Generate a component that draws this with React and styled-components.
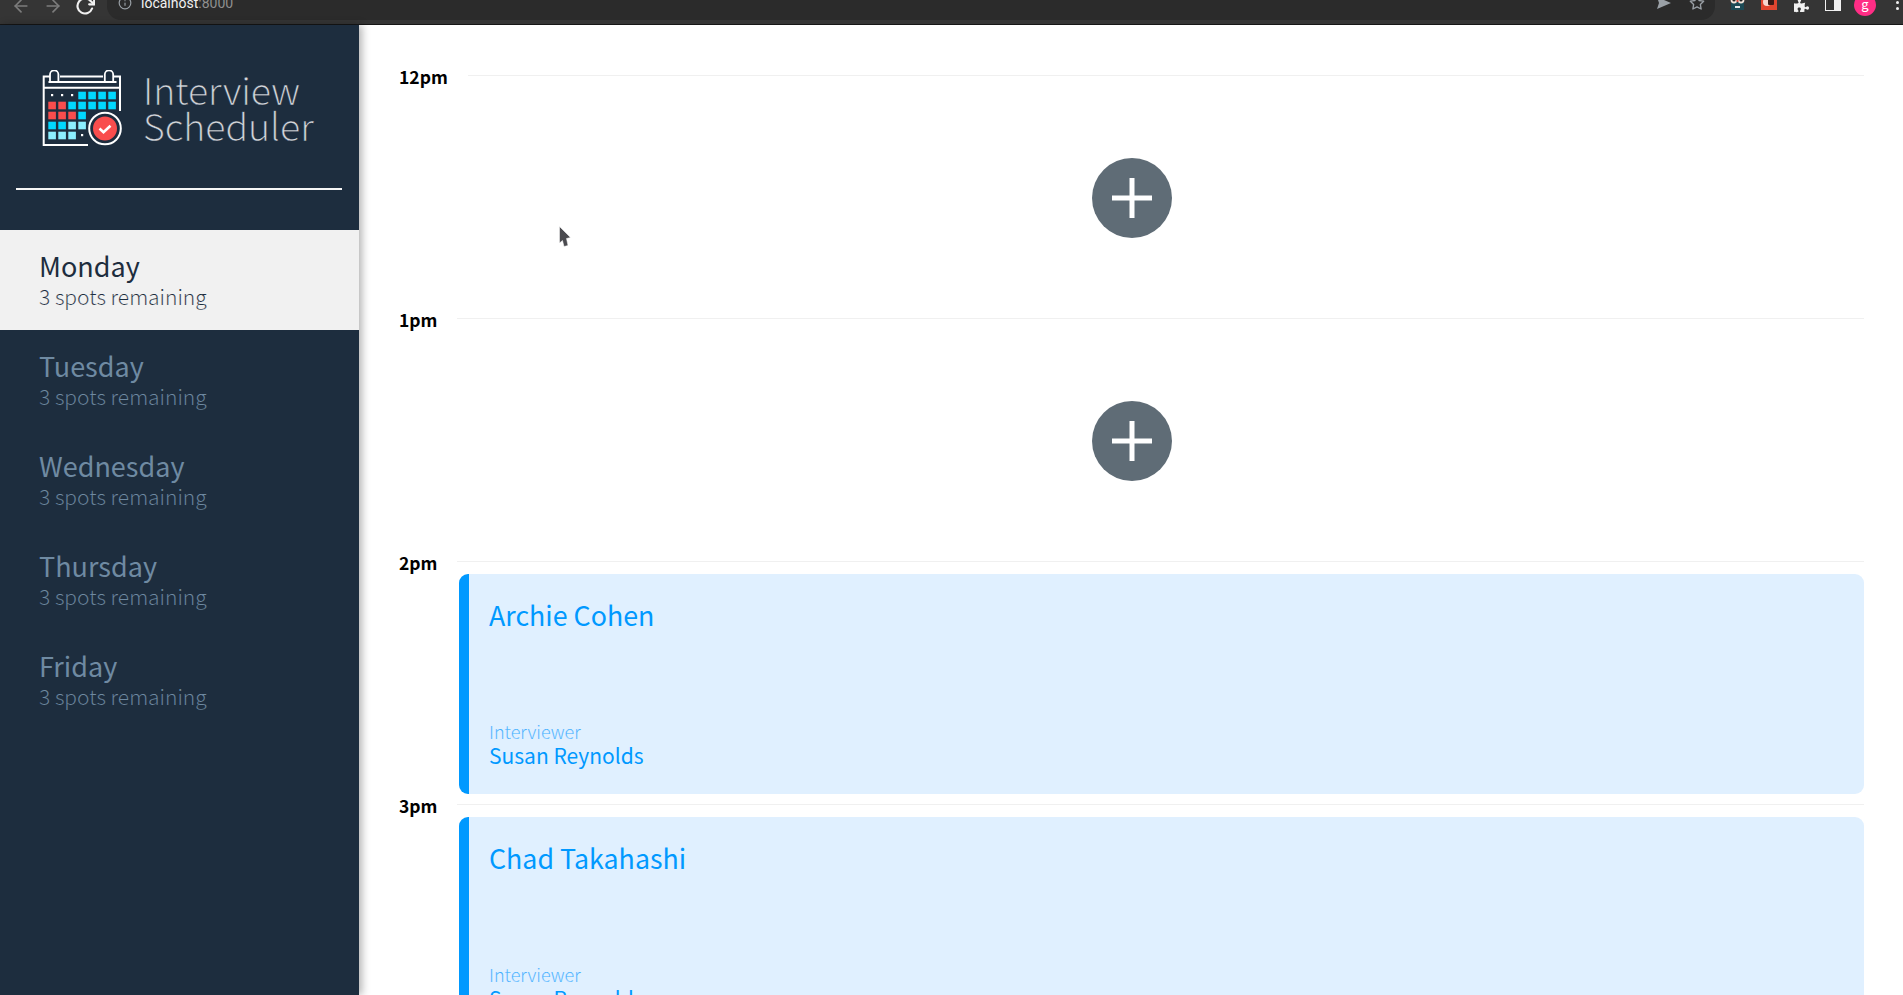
import React from 'react'
import styled, { createGlobalStyle } from 'styled-components'
import { FaPuzzlePiece } from 'react-icons/fa'
import { FiArrowLeft, FiArrowRight, FiRotateCw, FiInfo, FiStar } from 'react-icons/fi'

const sans = '"Noto Sans CJK SC", "Noto Sans", sans-serif'

const GlobalStyle = createGlobalStyle`
  html, body {
    margin: 0;
    height: 100%;
    overflow: hidden;
    font-family: ${sans};
  }
`

const days = ['Monday', 'Tuesday', 'Wednesday', 'Thursday', 'Friday']

const slots = [
  { time: '12pm' },
  { time: '1pm' },
  { time: '2pm', student: 'Archie Cohen', interviewer: 'Susan Reynolds' },
  { time: '3pm', student: 'Chad Takahashi', interviewer: 'Susan Reynolds' },
]

const cells = [
  [36.3, 21.7, '#00d8ff'], [46.3, 21.7, '#00d8ff'], [56.3, 21.7, '#00d8ff'], [66.3, 21.7, '#00d8ff'],
  [6.3, 31.7, '#f94d4d'], [16.3, 31.7, '#f94d4d'], [26.3, 31.7, '#00d8ff'], [36.3, 31.7, '#00d8ff'],
  [46.3, 31.7, '#00d8ff'], [56.3, 31.7, '#00d8ff'], [66.3, 31.7, '#00d8ff'],
  [6.3, 41.7, '#f94d4d'], [16.3, 41.7, '#f94d4d'], [26.3, 41.7, '#f94d4d'], [36.3, 41.7, '#00d8ff'],
  [6.3, 51.7, '#00d8ff'], [16.3, 51.7, '#00d8ff'], [26.3, 51.7, '#8cefff'], [36.3, 51.7, '#8cefff'],
  [6.3, 61.7, '#8cefff'], [16.3, 61.7, '#8cefff'], [26.3, 61.7, '#8cefff'],
]

function Logo() {
  return (
    <svg width="80" height="76" viewBox="0 0 80 76" fill="none" stroke="#fff" strokeWidth="2">
      <path d="M46 75H1.7V6.5H8M18 6.5H61M71 6.5H78V41" />
      <path d="M6.5 12H74.5M1.7 17.7H78" />
      <path d="M8 11V4.5a4.2 4.2 0 0 1 8.4 0V11M62.8 11V4.5a4.2 4.2 0 0 1 8.4 0V11" strokeWidth="1.8" />
      {cells.map(([x, y, c]) => (
        <rect key={`${x}-${y}`} x={x} y={y} width="7.6" height="7.6" fill={c} stroke="none" />
      ))}
      {[[10, 25], [20, 25], [30, 25], [40, 65]].map(([x, y]) => (
        <rect key={x} x={x - 1} y={y - 1} width="2.2" height="2.2" fill="#fff" stroke="none" />
      ))}
      <circle cx="63" cy="58.5" r="15.8" fill="#1d2d3e" />
      <circle cx="63" cy="58.5" r="12" fill="#f94d4d" stroke="none" />
      <path d="M57.5 58.5l4 3.8 7-6.6" strokeWidth="2.6" />
    </svg>
  )
}

function Plus() {
  return (
    <svg width="40" height="40" viewBox="0 0 40 40" stroke="#fff" strokeWidth="5">
      <path d="M20 0V40M0 20H40" />
    </svg>
  )
}

function SendIcon() {
  return (
    <svg width="14" height="16" viewBox="0 0 14 16">
      <path d="M0 2L14 8L0 14L2 8Z" fill="#9aa0a6" />
    </svg>
  )
}

function OwlExt() {
  return (
    <ExtIcon width="15" height="16" viewBox="0 0 15 16">
      <rect x="1" y="7" width="13" height="9" fill="#1d4a55" />
      <circle cx="4" cy="6" r="3.4" fill="#f3e4da" />
      <circle cx="11" cy="6" r="3.4" fill="#f3e4da" />
      <circle cx="4" cy="6" r="1.6" fill="#222" />
      <circle cx="11" cy="6" r="1.6" fill="#222" />
      <rect x="5" y="12" width="5" height="2" fill="#e8e8e8" />
      <rect x="6.5" y="6" width="2" height="2" fill="#d2483a" />
    </ExtIcon>
  )
}

function RedExt() {
  return (
    <ExtIcon $ml="16px" width="16" height="16" viewBox="0 0 16 16">
      <rect width="16" height="16" fill="#e0452f" />
      <circle cx="6" cy="8" r="4" fill="#f6d7d0" />
      <rect x="7" y="5" width="6" height="6" rx="1" fill="#3a1a16" />
    </ExtIcon>
  )
}

export default function App() {
  return (
    <>
      <GlobalStyle />
      <Page>
        <BrowserBar>
          <NavIcons>
            <NavIcon $dim><FiArrowLeft /></NavIcon>
            <NavIcon $dim><FiArrowRight /></NavIcon>
            <NavIcon><FiRotateCw strokeWidth={2.6} /></NavIcon>
          </NavIcons>
          <Omnibox>
            <UrlGroup>
              <FiInfo size={14} color="#9aa0a6" />
              <Url>localhost<UrlPort>:8000</UrlPort></Url>
            </UrlGroup>
            <UrlActions>
              <SendIcon />
              <FiStar size={16} color="#9aa0a6" />
            </UrlActions>
          </Omnibox>
          <Extensions>
            <OwlExt />
            <RedExt />
            <Puzzle><FaPuzzlePiece size={15} color="#f1f1f1" /></Puzzle>
            <SideToggle />
            <Avatar>g</Avatar>
            <Kebab>
              <i /><i />
            </Kebab>
          </Extensions>
        </BrowserBar>
        <Layout>
          <Sidebar>
            <Brand>
              <Logo />
              <BrandName>Interview<br />Scheduler</BrandName>
            </Brand>
            <Divider />
            <DayList>
              {days.map((day, i) => (
                <DayItem key={day} $active={i === 0}>
                  <DayName>{day}</DayName>
                  <Spots $active={i === 0}>3 spots remaining</Spots>
                </DayItem>
              ))}
            </DayList>
          </Sidebar>
          <Schedule>
            {slots.map(slot => (
              <Slot key={slot.time}>
                <TimeRow>
                  <TimeLabel>{slot.time}</TimeLabel>
                  <TimeLine />
                </TimeRow>
                {slot.student ? (
                  <Card>
                    <Student>{slot.student}</Student>
                    <div>
                      <CardLabel>Interviewer</CardLabel>
                      <Interviewer>{slot.interviewer}</Interviewer>
                    </div>
                  </Card>
                ) : (
                  <Empty>
                    <AddButton><Plus /></AddButton>
                  </Empty>
                )}
              </Slot>
            ))}
          </Schedule>
        </Layout>
        <Cursor width="12" height="21" viewBox="0 0 12 21">
          <path d="M0.5 0.5L11.5 11.5L7.5 12.5L9 19.5L5 20.5L3.5 14.5L0.5 17Z" fill="#4a4a4f" stroke="#fff" strokeWidth="0.5" />
        </Cursor>
      </Page>
    </>
  )
}

const Page = styled.div`
  position: relative;
  height: 995px;
  overflow: hidden;
  display: flex;
  flex-direction: column;
`

const BrowserBar = styled.div`
  height: 24px;
  flex: none;
  display: flex;
  background: #353535;
  border-bottom: 1px solid #161616;
`

const NavIcons = styled.div`
  width: 107px;
  flex: none;
  display: flex;
  padding-left: 11px;
  box-sizing: border-box;
  gap: 12px;
  margin-top: -7px;
`

const NavIcon = styled.span`
  width: 20px;
  height: 20px;
  font-size: 20px;
  color: ${p => (p.$dim ? '#7c7c7c' : '#f1f1f1')};
`

const Omnibox = styled.div`
  width: 1608px;
  flex: none;
  height: 20px;
  background: #2b2b2b;
  border-radius: 0 0 14px 14px;
  display: flex;
  justify-content: space-between;
  align-items: flex-end;
  padding: 0 10px 9px 11px;
  box-sizing: border-box;
  overflow: hidden;
`

const UrlGroup = styled.div`
  display: flex;
  align-items: center;
  gap: 9px;
`

const Url = styled.span`
  font-family: "Roboto", sans-serif;
  font-size: 14px;
  line-height: 16px;
  color: #f1f1f1;
`

const UrlPort = styled.span`
  color: #8f8f8f;
`

const UrlActions = styled.div`
  display: flex;
  gap: 18px;
`

const Extensions = styled.div`
  flex: 1;
  display: flex;
  align-items: flex-start;
  margin-top: -6px;
  padding-left: 15px;
  height: 22px;
`

const ExtIcon = styled.svg`
  flex: none;
  margin-left: ${p => p.$ml || 0};
`

const Puzzle = styled.span`
  margin-left: 17px;
  height: 16px;
`

const SideToggle = styled.span`
  width: 14px;
  height: 16px;
  margin-left: 17px;
  box-sizing: border-box;
  background: #f1f1f1;
  border-left: 8px solid #353535;
  outline: 1px solid #f1f1f1;
`

const Avatar = styled.span`
  width: 22px;
  height: 22px;
  margin-left: 14px;
  border-radius: 50%;
  background: #ff2d85;
  color: #fff;
  font-size: 13px;
  line-height: 20px;
  text-align: center;
`

const Kebab = styled.span`
  display: flex;
  flex-direction: column;
  gap: 3px;
  margin-left: 20px;
  padding-top: 7px;

  i {
    width: 3px;
    height: 3px;
    border-radius: 50%;
    background: #f1f1f1;
  }
`

const Layout = styled.div`
  flex: 1;
  display: flex;
  min-height: 0;
`

const Sidebar = styled.aside`
  width: 359px;
  flex: none;
  background: #1d2d3e;
  box-shadow: 3px 0 8px rgba(0, 0, 0, 0.3);
  position: relative;
  z-index: 1;
`

const Brand = styled.div`
  display: flex;
  align-items: flex-start;
  gap: 21px;
  padding: 45px 0 0 42px;
  height: 118px;
`

/* only a regular cut of this family is installed, the thin stroke in the
   background colour brings it down to the light weight of the reference */
const BrandName = styled.div`
  font-size: 37.4px;
  line-height: 36px;
  font-weight: 300;
  color: #d5d9dd;
  margin-top: 1px;
  -webkit-text-stroke: 0.4px #1d2d3e;
`

const Divider = styled.div`
  height: 2px;
  margin: 0 17px 40px 16px;
  background: #f5f5f5;
`

const DayList = styled.div`
  display: flex;
  flex-direction: column;
`

const DayItem = styled.div`
  height: 100px;
  padding: 0 0 4px 39px;
  box-sizing: border-box;
  display: flex;
  flex-direction: column;
  justify-content: center;
  background: ${p => (p.$active ? '#f1f1f1' : 'transparent')};
  color: ${p => (p.$active ? '#1d2d3e' : '#6f8aa2')};
`

const DayName = styled.div`
  font-size: 27px;
  line-height: 36px;
  font-weight: 400;
`

const Spots = styled.div`
  font-size: 21px;
  line-height: 26px;
  margin-top: -1px;
  font-weight: 300;
  -webkit-text-stroke: 0.15px ${p => (p.$active ? '#f1f1f1' : '#1d2d3e')};
`

const Schedule = styled.main`
  flex: 1;
  padding: 50px 39px 0 40px;
  min-width: 0;
  overflow: hidden;
`

const Slot = styled.section`
  height: 243px;
`

const TimeRow = styled.div`
  display: flex;
  align-items: center;
  gap: 20px;
  height: 1px;
`

const TimeLabel = styled.span`
  flex: none;
  font-size: 17.5px;
  font-weight: 700;
  line-height: 24px;
  padding-top: 3px;
  color: #000;
`

const TimeLine = styled.div`
  flex: 1;
  height: 1px;
  background: #f0f0f0;
`

const Card = styled.article`
  height: 220px;
  margin: 12px 0 0 60px;
  box-sizing: border-box;
  padding: 21px 20px 26px 20px;
  background: #e0f0ff;
  border-left: 10px solid #0099ff;
  border-radius: 9px;
  color: #0099ff;
  display: flex;
  flex-direction: column;
  justify-content: space-between;
`

const Student = styled.div`
  font-size: 26.8px;
  line-height: 40px;
`

const CardLabel = styled.div`
  font-size: 18px;
  line-height: 22px;
  font-weight: 300;
  color: #3faeff;
  -webkit-text-stroke: 0.12px #e0f0ff;
`

const Interviewer = styled.div`
  font-size: 21px;
  line-height: 26px;
`

const Empty = styled.div`
  height: 220px;
  margin-top: 12px;
  display: flex;
  align-items: center;
  justify-content: center;
`

const AddButton = styled.button`
  width: 80px;
  height: 80px;
  padding: 0;
  border: 0;
  border-radius: 50%;
  background: #5f6c76;
  display: flex;
  align-items: center;
  justify-content: center;
`

const Cursor = styled.svg`
  position: absolute;
  left: 559px;
  top: 226px;
  z-index: 2;
`
